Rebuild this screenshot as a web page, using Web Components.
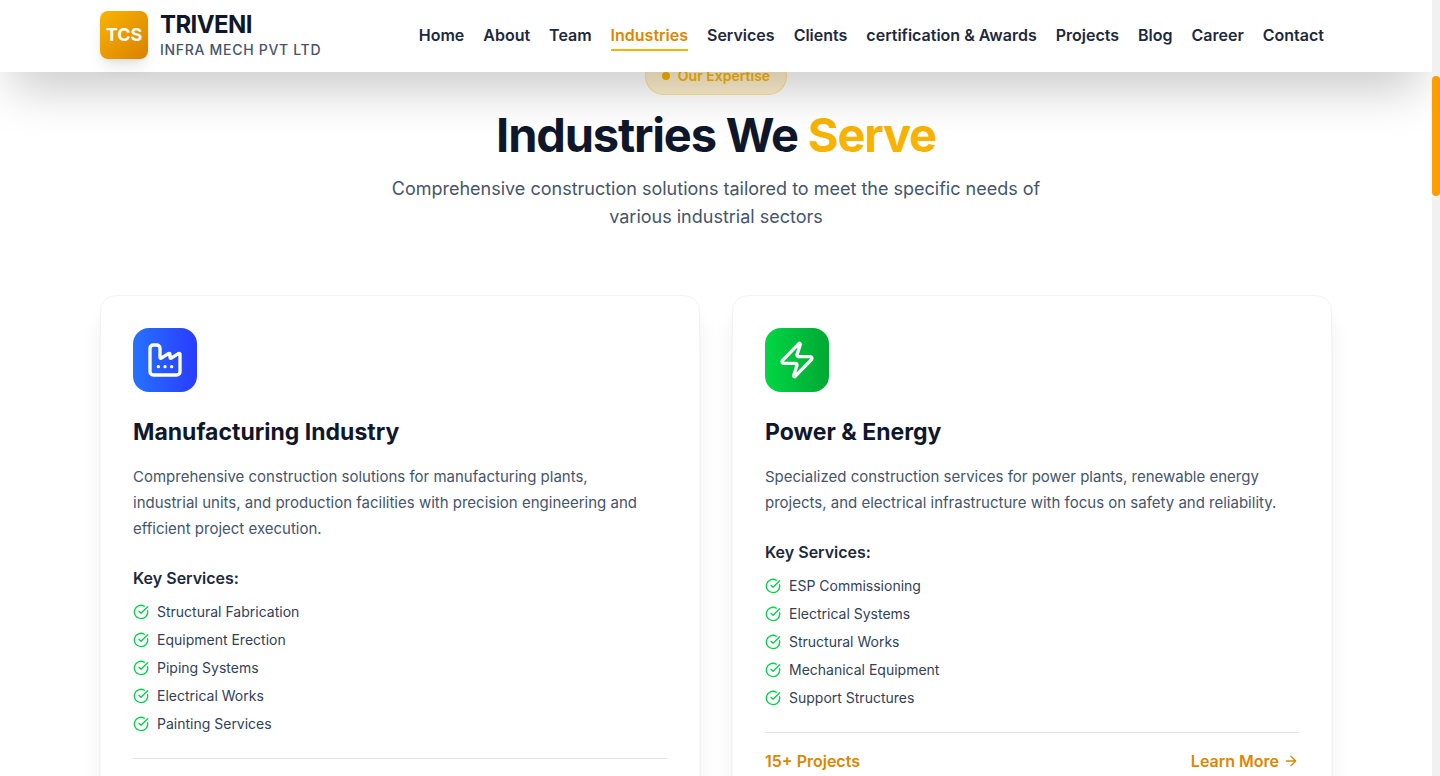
<!DOCTYPE html>
<html lang="en">
<head>
<meta charset="utf-8">
<meta name="viewport" content="width=device-width, initial-scale=1">
<title>Triveni Infra Mech Pvt Ltd – Industries</title>
<style>
  body { margin: 0; background: #fff; color: #0f172b; font-family: Inter, "Liberation Sans", sans-serif; font-size: 16px; line-height: 24px; }
</style>
</head>
<body>
<page-shell>
  <site-header slot="header"></site-header>
  <section-intro>
    <span slot="badge">Our Expertise</span>
    <span slot="title">Industries We</span>
    <span slot="accent">Serve</span>
    Comprehensive construction solutions tailored to meet the specific needs of various industrial sectors
  </section-intro>
  <card-grid>
    <industry-card icon="factory" style="--from:#2672ff;--to:#2a3cff">
      <span slot="title">Manufacturing Industry</span>
      Comprehensive construction solutions for manufacturing plants, industrial units, and production facilities with precision engineering and efficient project execution.
      <service-item slot="services">Structural Fabrication</service-item>
      <service-item slot="services">Equipment Erection</service-item>
      <service-item slot="services">Piping Systems</service-item>
      <service-item slot="services">Electrical Works</service-item>
      <service-item slot="services">Painting Services</service-item>
    </industry-card>
    <industry-card icon="zap" style="--from:#00d645;--to:#00a832">
      <span slot="title">Power &amp; Energy</span>
      Specialized construction services for power plants, renewable energy projects, and electrical infrastructure with focus on safety and reliability.
      <service-item slot="services">ESP Commissioning</service-item>
      <service-item slot="services">Electrical Systems</service-item>
      <service-item slot="services">Structural Works</service-item>
      <service-item slot="services">Mechanical Equipment</service-item>
      <service-item slot="services">Support Structures</service-item>
      <span slot="count">15+ Projects</span>
      <learn-more slot="action">Learn More</learn-more>
    </industry-card>
  </card-grid>
</page-shell>
<script>
const define = (name, html, setup) => customElements.define(name, class extends HTMLElement {
  constructor() {
    super();
    this.attachShadow({ mode: 'open' }).innerHTML = html;
  }
  connectedCallback() { if (setup) setup(this, this.shadowRoot); }
});

define('page-shell', `
<style>
  :host { display: grid; grid-template-columns: 1fr 8px; height: 100vh; overflow: hidden; }
  .view { position: relative; overflow: hidden; min-width: 0; }
  main { padding: 57px 24px 64px; max-width: 1232px; margin: 0 auto; }
  .track { background: #f1f1f1; padding-top: 76px; }
  .thumb { height: 120px; border-radius: 4px; background: #ff9d00; }
</style>
<div class="view"><slot name="header"></slot><main><slot></slot></main></div>
<div class="track"><div class="thumb"></div></div>`);

define('site-header', `
<style>
  :host { display: block; position: absolute; top: 0; left: 0; right: 0; z-index: 10; background: #fff; border-bottom: 2px solid #fff; box-shadow: 0 25px 50px -12px rgba(0,0,0,.25); }
  .bar { max-width: 1232px; margin: 0 auto; padding: 10px 24px; display: flex; align-items: center; justify-content: space-between; }
  .brand { display: flex; align-items: center; gap: 12px; color: inherit; text-decoration: none; }
  .mark { display: grid; place-items: center; width: 48px; height: 48px; border-radius: 8px; background: linear-gradient(135deg, #f9b400, #d98100); color: #fff; font-weight: 700; font-size: 18px; box-shadow: 0 10px 15px -3px rgba(0,0,0,.1), 0 4px 6px -4px rgba(0,0,0,.1); }
  .name { display: block; font-weight: 700; font-size: 24px; line-height: 30px; letter-spacing: -0.025em; }
  .sub { display: block; font-weight: 500; font-size: 14px; line-height: 20px; letter-spacing: 0.05em; color: #45556c; }
  nav { display: flex; gap: 3px; }
  nav a { position: relative; padding: 4px 8px; color: #1d293d; font-weight: 600; text-decoration: none; white-space: nowrap; }
  nav a[aria-current] { color: #dc8700; }
  nav a[aria-current]::after { content: ""; position: absolute; left: 8px; right: 8px; bottom: 0; height: 2px; background: #f8b300; }
</style>
<div class="bar">
  <a class="brand" href="#home"><span class="mark">TCS</span><span><span class="name">TRIVENI</span><span class="sub">INFRA MECH PVT LTD</span></span></a>
  <nav>
    <a href="#home">Home</a><a href="#about">About</a><a href="#team">Team</a><a href="#industries" aria-current="page">Industries</a><a href="#services">Services</a><a href="#clients">Clients</a><a href="#certification">certification &amp; Awards</a><a href="#projects">Projects</a><a href="#blog">Blog</a><a href="#career">Career</a><a href="#contact">Contact</a>
  </nav>
</div>`);

define('section-intro', `
<style>
  :host { display: flex; flex-direction: column; align-items: center; gap: 16px; margin-bottom: 64px; text-align: center; }
  .badge { display: flex; align-items: center; gap: 8px; padding: 8px 16px; border: 1px solid rgba(248,179,0,.3); border-radius: 19px; background: rgba(248,179,0,.2); color: #f8b300; font-weight: 600; font-size: 14px; line-height: 20px; }
  .badge::before { content: ""; width: 8px; height: 8px; border-radius: 50%; background: currentColor; }
  h1 { margin: 0; font-weight: 700; font-size: 47px; line-height: 48px; letter-spacing: -0.025em; }
  em { font-style: normal; color: #f8b300; }
  p { margin: 0; max-width: 672px; font-size: 18px; line-height: 28px; color: #45556c; }
</style>
<div class="badge"><slot name="badge"></slot></div>
<h1><slot name="title"></slot> <em><slot name="accent"></slot></em></h1>
<p><slot></slot></p>`);

define('card-grid', `
<style>:host { display: grid; grid-template-columns: 1fr 1fr; gap: 32px; }</style>
<slot></slot>`);

const icons = {
  factory: '<path d="M12 16h.01M16 16h.01M8 16h.01M3 19a2 2 0 0 0 2 2h14a2 2 0 0 0 2-2V8.5a.5.5 0 0 0-.769-.422l-4.462 2.844A.5.5 0 0 1 15 10.5v-2a.5.5 0 0 0-.769-.422L9.77 10.922A.5.5 0 0 1 9 10.5V5a2 2 0 0 0-2-2H5a2 2 0 0 0-2 2z"/>',
  zap: '<path d="M4 14a1 1 0 0 1-.78-1.63l9.9-10.2a.5.5 0 0 1 .86.46l-1.92 6.02A1 1 0 0 0 13 10h7a1 1 0 0 1 .78 1.63l-9.9 10.2a.5.5 0 0 1-.86-.46l1.92-6.02A1 1 0 0 0 11 14z"/>'
};

define('industry-card', `
<style>
  :host { display: block; padding: 32px; border: 1px solid #f1f3f6; border-radius: 16px; background: #fff; box-shadow: 0 20px 25px -5px rgba(0,0,0,.1), 0 8px 10px -6px rgba(0,0,0,.1); }
  .icon { display: grid; place-items: center; width: 64px; height: 64px; margin-bottom: 24px; border-radius: 16px; background: linear-gradient(to right, var(--from), var(--to)); }
  svg { width: 40px; height: 40px; fill: none; stroke: #fff; stroke-width: 2; stroke-linecap: round; stroke-linejoin: round; }
  h2 { margin: 0 0 16px; font-weight: 700; font-size: 23px; line-height: 32px; }
  p { margin: 0 0 24px; max-width: 520px; font-size: 15px; line-height: 26px; color: #45556c; }
  h3 { margin: 0 0 12px; font-weight: 600; font-size: 16px; line-height: 24px; color: #1d293d; }
  .services { display: flex; flex-direction: column; gap: 8px; margin-bottom: 24px; }
  footer { display: flex; justify-content: space-between; padding-top: 16px; border-top: 1px solid #e2e4ee; color: #dc8700; font-weight: 600; }
</style>
<div class="icon"><svg viewBox="0 0 24 24" aria-hidden="true"></svg></div>
<h2><slot name="title"></slot></h2>
<p><slot></slot></p>
<h3>Key Services:</h3>
<div class="services" role="list"><slot name="services"></slot></div>
<footer><slot name="count"></slot><slot name="action"></slot></footer>`,
(host, root) => { root.querySelector('svg').innerHTML = icons[host.getAttribute('icon')]; });

define('service-item', `
<style>
  :host { display: flex; align-items: center; gap: 8px; font-size: 14px; line-height: 20px; color: #314158; }
  svg { width: 16px; height: 16px; fill: none; stroke: #00d24a; stroke-width: 2; stroke-linecap: round; stroke-linejoin: round; }
</style>
<svg viewBox="0 0 24 24" aria-hidden="true"><path d="M21.801 10A10 10 0 1 1 17 3.335"/><path d="m9 11 3 3L22 4"/></svg><span><slot></slot></span>`,
host => host.setAttribute('role', 'listitem'));

define('learn-more', `
<style>
  :host { display: block; }
  a { display: flex; align-items: center; gap: 4px; color: inherit; text-decoration: none; }
  svg { width: 16px; height: 16px; fill: none; stroke: currentColor; stroke-width: 2; stroke-linecap: round; stroke-linejoin: round; }
</style>
<a href="#projects"><slot></slot><svg viewBox="0 0 24 24" aria-hidden="true"><path d="M5 12h14M12 5l7 7-7 7"/></svg></a>`);
</script>
</body>
</html>
